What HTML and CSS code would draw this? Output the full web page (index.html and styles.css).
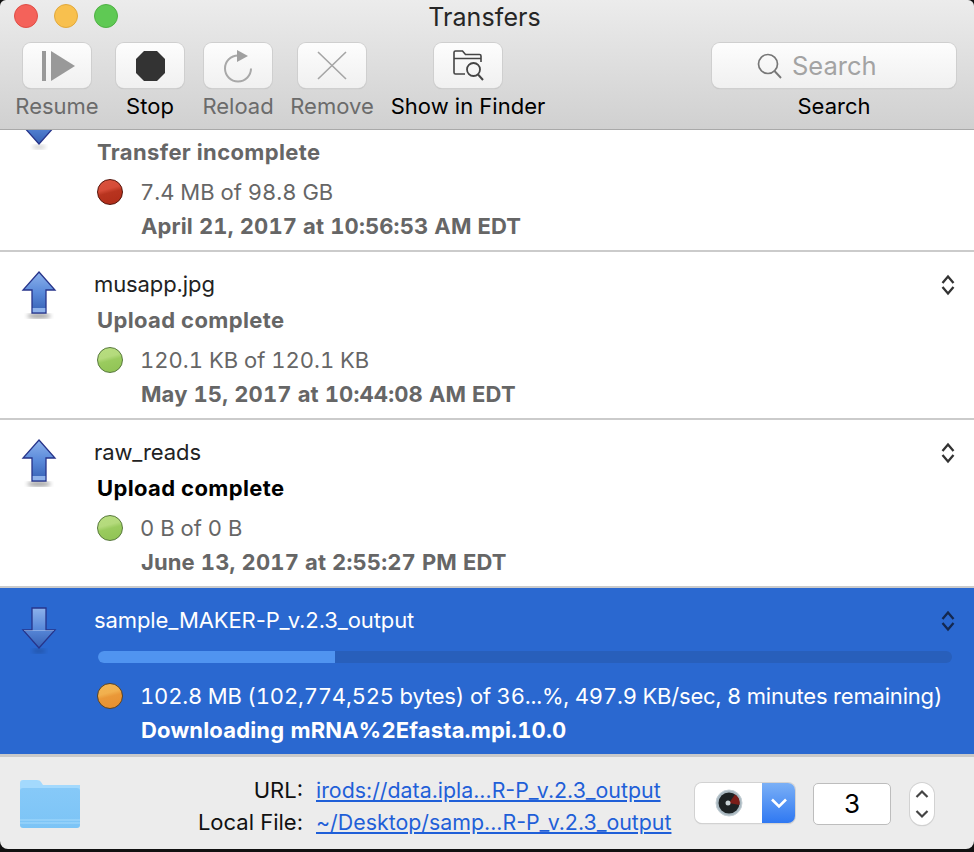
FILE: index.html
```html
<!DOCTYPE html>
<html lang="en">
<head>
  <meta charset="UTF-8">
  <title>Transfers</title>
  <link rel="stylesheet" href="styles.css">
</head>
<body>
  <div class="window">
    <header class="toolbar">
      <div class="titlebar">
        <div class="lights">
          <span class="light red"></span>
          <span class="light yellow"></span>
          <span class="light green"></span>
        </div>
        <h1>Transfers</h1>
      </div>
      <div class="tools">
        <div class="tool tool-resume off">
          <button class="tool-btn">
            <svg width="68" height="45" viewBox="0 0 68 45"><rect x="19" y="8" width="4" height="30" fill="#999"/><path d="M28 8L52 23L28 38Z" fill="#999"/></svg>
          </button>
          <span>Resume</span>
        </div>
        <div class="tool">
          <button class="tool-btn">
            <svg width="68" height="45" viewBox="0 0 68 45"><path d="M28 8H41L49 16V30L41 38H28L20 30V16Z" fill="#333"/></svg>
          </button>
          <span>Stop</span>
        </div>
        <div class="tool tool-reload off">
          <button class="tool-btn">
            <svg width="68" height="45" viewBox="0 0 68 45"><path d="M34 12.500A13 13 0 1 0 47 25.500" fill="none" stroke="#a8a8a8" stroke-width="2"/><path d="M33 7L44 13L33 19Z" fill="#a0a0a0"/></svg>
          </button>
          <span>Reload</span>
        </div>
        <div class="tool tool-remove off">
          <button class="tool-btn">
            <svg width="68" height="45" viewBox="0 0 68 45"><path d="M20 9L48 36M48 9L20 36" fill="none" stroke="#a5a5a5" stroke-width="1.600"/></svg>
          </button>
          <span>Remove</span>
        </div>
        <div class="tool tool-finder">
          <button class="tool-btn">
            <svg width="68" height="45" viewBox="0 0 68 45"><path d="M31 31H21.500Q20 31 20 29.500V9.500Q20 8 21.500 8H28.500L31.500 11.500H45.500Q47 11.500 47 13V19M20 15.500H47" fill="none" stroke="#444" stroke-width="1.600"/><circle cx="39.500" cy="26.500" r="6.500" fill="none" stroke="#444" stroke-width="1.800"/><path d="M44 31.500L49 37" stroke="#444" stroke-width="2"/></svg>
          </button>
          <span>Show in Finder</span>
        </div>
        <div class="tool tool-search">
          <div class="search-box">
            <svg width="26" height="26" viewBox="0 0 26 26"><circle cx="11" cy="11" r="9.500" fill="none" stroke="#777" stroke-width="1.700"/><path d="M17.500 18L24 25" stroke="#777" stroke-width="1.900"/></svg>
            <span>Search</span>
          </div>
          <span>Search</span>
        </div>
      </div>
    </header>

    <main class="list">
      <section class="row row-cut">
        <svg class="arrow" width="38" height="50" viewBox="0 0 38 50">
          <defs>
            <linearGradient id="arrowFill" x1="0" y1="0" x2="0" y2="1">
              <stop offset="0" stop-color="#8db2ec"/>
              <stop offset="0.5" stop-color="#5a8ada"/>
              <stop offset="1" stop-color="#3560b4"/>
            </linearGradient>
            <filter id="soft"><feGaussianBlur stdDeviation="2"/></filter>
            <g id="arrowDown">
              <ellipse cx="18" cy="44" rx="7" ry="2" fill="#000" opacity="0.2" filter="url(#soft)"/>
              <path d="M11 1H25V23H34L18 41L2 23H11Z" fill="url(#arrowFill)" stroke="#27348a" stroke-width="1.300"/>
              <path d="M3 23.500H33" stroke="#a9c4f0" stroke-width="1" opacity="0.6"/>
            </g>
            <g id="arrowUp">
              <ellipse cx="18" cy="45" rx="12" ry="2.500" fill="#000" opacity="0.4" filter="url(#soft)"/>
              <path d="M18 1L34 19H25V42H11V19H2Z" fill="url(#arrowFill)" stroke="#27348a" stroke-width="1.300"/>
              <path d="M11.700 37H24.300V41.300H11.700Z" fill="#8fb2ea"/>
            </g>
          </defs>
          <use href="#arrowDown"/>
        </svg>
        <div class="info">
          <div class="name">&nbsp;</div>
          <div class="status">Transfer incomplete</div>
          <div class="detail"><span class="dot dot-red"></span>7.4 MB of 98.8 GB</div>
          <div class="date">April 21, 2017 at 10:56:53 AM EDT</div>
        </div>
        <svg class="updown" width="14" height="22" viewBox="0 0 14 22"><path d="M1.500 9L7 2.500L12.500 9M1.500 13L7 19.500L12.500 13" fill="none" stroke="#333" stroke-width="2.300"/></svg>
      </section>

      <section class="row">
        <svg class="arrow" width="38" height="50" viewBox="0 0 38 50"><use href="#arrowUp"/></svg>
        <div class="info">
          <div class="name">musapp.jpg</div>
          <div class="status">Upload complete</div>
          <div class="detail"><span class="dot dot-green"></span>120.1 KB of 120.1 KB</div>
          <div class="date">May 15, 2017 at 10:44:08 AM EDT</div>
        </div>
        <svg class="updown" width="14" height="22" viewBox="0 0 14 22"><path d="M1.500 9L7 2.500L12.500 9M1.500 13L7 19.500L12.500 13" fill="none" stroke="#333" stroke-width="2.300"/></svg>
      </section>

      <section class="row">
        <svg class="arrow" width="38" height="50" viewBox="0 0 38 50"><use href="#arrowUp"/></svg>
        <div class="info">
          <div class="name">raw_reads</div>
          <div class="status status-dark">Upload complete</div>
          <div class="detail"><span class="dot dot-green"></span>0 B of 0 B</div>
          <div class="date">June 13, 2017 at 2:55:27 PM EDT</div>
        </div>
        <svg class="updown" width="14" height="22" viewBox="0 0 14 22"><path d="M1.500 9L7 2.500L12.500 9M1.500 13L7 19.500L12.500 13" fill="none" stroke="#333" stroke-width="2.300"/></svg>
      </section>

      <section class="row selected">
        <svg class="arrow" width="38" height="50" viewBox="0 0 38 50"><use href="#arrowDown"/></svg>
        <div class="info">
          <div class="name">sample_MAKER-P_v.2.3_output</div>
          <div class="progress"><div class="progress-fill" style="width: 27.8%"></div></div>
          <div class="detail detail-after-bar"><span class="dot dot-orange"></span>102.8 MB (102,774,525 bytes) of 36...%, 497.9 KB/sec, 8 minutes remaining)</div>
          <div class="date">Downloading mRNA%2Efasta.mpi.10.0</div>
        </div>
        <svg class="updown" width="14" height="22" viewBox="0 0 14 22"><path d="M1.500 9L7 2.500L12.500 9M1.500 13L7 19.500L12.500 13" fill="none" stroke="#14284f" stroke-width="2.300"/></svg>
      </section>
    </main>

    <footer class="bottom">
      <svg class="folder" width="60" height="48" viewBox="0 0 60 48">
        <defs>
          <linearGradient id="folderFill" x1="0" y1="0" x2="0" y2="1">
            <stop offset="0" stop-color="#86c9f8"/>
            <stop offset="1" stop-color="#7cc4f6"/>
          </linearGradient>
        </defs>
        <path d="M0 3Q0 0 3 0H17Q20 0 21 2L23 5H60V12H0Z" fill="#a3d9fd"/>
        <path d="M0 11Q0 8 3 8H57Q60 8 60 11V45Q60 48 57 48H3Q0 48 0 45Z" fill="url(#folderFill)"/>
        <path d="M0 40H60M0 43H60" stroke="#a6dafc" stroke-width="1"/>
      </svg>
      <div class="paths">
        <span class="path-label">URL:</span>
        <a class="path-link" href="#">irods://data.ipla...R-P_v.2.3_output</a>
        <span class="path-label">Local File:</span>
        <a class="path-link" href="#">~/Desktop/samp...R-P_v.2.3_output</a>
      </div>
      <div class="popup">
        <div class="popup-value">
          <svg width="28" height="28" viewBox="0 0 28 28">
            <circle cx="14" cy="14" r="13" fill="#a9b8c0" stroke="#c3ced4" stroke-width="1"/>
            <circle cx="14" cy="14" r="10.500" fill="#1d2224"/>
            <path d="M14 14L24.500 16A10.500 10.500 0 0 0 20 5.500Z" fill="#7a1d18"/>
            <circle cx="13" cy="14" r="2.500" fill="#c8d2d6"/>
          </svg>
        </div>
        <div class="popup-arrow">
          <svg width="18" height="12" viewBox="0 0 18 12"><path d="M2 2.500L9 9.500L16 2.500" fill="none" stroke="#fff" stroke-width="2.600"/></svg>
        </div>
      </div>
      <div class="count">3</div>
      <div class="stepper">
        <svg width="16" height="32" viewBox="0 0 16 32"><path d="M2.500 9L8 3.500L13.500 9M2.500 23L8 28.500L13.500 23" fill="none" stroke="#444" stroke-width="2.200"/></svg>
      </div>
    </footer>
  </div>
</body>
</html>
```

FILE: styles.css
```css
html, body {
  margin: 0;
  height: 100%;
  background: #111;
}
.window {
  width: 974px;
  height: 849px;
  display: flex;
  flex-direction: column;
  overflow: hidden;
  border-radius: 6px 6px 8px 8px;
  font-family: 'Inter', 'Liberation Sans', sans-serif;
  font-size: 22px;
}

/* toolbar */
.toolbar {
  height: 129px;
  flex: none;
  background: linear-gradient(#ececec, #d0d0d0);
  border-bottom: 1px solid #a9a9a9;
  box-sizing: content-box;
}
.titlebar {
  height: 34px;
  position: relative;
  display: flex;
  justify-content: center;
  align-items: center;
}
.lights {
  position: absolute;
  left: 14px;
  top: 4px;
  display: flex;
  gap: 16px;
}
.light {
  width: 24px;
  height: 24px;
  border-radius: 50%;
  box-sizing: border-box;
}
.red { background: #f4625a; border: 1px solid #de4e46; }
.yellow { background: #f8c04e; border: 1px solid #e0a83c; }
.green { background: #5fc954; border: 1px solid #4fb044; }
.titlebar h1 {
  margin: 0 5px 0 0;
  font-size: 25px;
  letter-spacing: 0.1px;
  font-weight: 400;
  color: #262626;
}
.tools {
  display: flex;
  gap: 18px;
  padding: 9px 18px 0 16px;
}
.tool {
  flex: none;
  width: 68px;
  display: flex;
  flex-direction: column;
  align-items: center;
  color: #000;
}
.tool > span {
  margin-top: 5px;
  line-height: 26px;
  white-space: nowrap;
}
.tool.off > span { color: #6b6b6b; }
.tool-resume { width: 82px; }
.tool-reload { margin-left: 2px; }
.tool-remove { width: 82px; margin-left: 1px; }
.tool-finder { width: 154px; }
.tool-btn {
  width: 68px;
  height: 45px;
  padding: 0;
  background: linear-gradient(#fdfdfd, #f0f0f0);
  border: none;
  border-radius: 8px;
  box-shadow: 0 0 0 1px #cfcfcf, 0 1px 1px #b5b5b5;
}
.tool-btn svg { display: block; }
.tool-search { width: 244px; margin-left: auto; }
.search-box {
  width: 244px;
  height: 45px;
  box-sizing: border-box;
  padding-left: 45px;
  display: flex;
  align-items: center;
  gap: 9px;
  background: linear-gradient(#fdfdfd, #f0f0f0);
  border-radius: 8px;
  box-shadow: 0 0 0 1px #cfcfcf, 0 1px 1px #b5b5b5;
  color: #a3a3a3;
  font-size: 25.500px;
}

/* transfer list */
.list {
  flex: 1;
  overflow: hidden;
  background: #fff;
}
.row {
  display: grid;
  grid-template-columns: 94px 1fr 40px;
  height: 166px;
  border-bottom: 2px solid #cbcbcb;
  background: #fff;
  color: #666;
}
.row-cut { margin-top: -46px; }
.arrow {
  margin: 19px 0 0 21px;
}
.updown {
  margin: 22px 0 0 7px;
}
.info { min-width: 0; }
.name {
  margin-top: 14px;
  line-height: 36px;
  color: #222;
  letter-spacing: -0.1px;
}
.status {
  line-height: 36px;
  margin-left: 3px;
  font-weight: 700;
  letter-spacing: 0.37px;
  white-space: nowrap;
}
.status-dark { color: #000; }
.detail {
  margin: 5px 0 0 3px;
  line-height: 34px;
  display: flex;
  align-items: center;
  white-space: nowrap;
  font-variant-numeric: tabular-nums;
}
.date {
  margin: 1px 0 0 47px;
  line-height: 33px;
  font-weight: 700;
  letter-spacing: 0.12px;
  white-space: nowrap;
  font-variant-numeric: tabular-nums;
}
.dot {
  width: 26px;
  height: 26px;
  margin-right: 17px;
  flex: none;
  box-sizing: border-box;
  border-radius: 50%;
}
.dot-red {
  background: linear-gradient(165deg, #d9533e 0, #d64c38 38%, #b8341f 52%, #b02c18 100%);
  border: 1px solid #551208;
}
.dot-green {
  background: linear-gradient(165deg, #b8de80 0, #b4da7c 38%, #9acb5e 52%, #8fc254 100%);
  border: 1px solid #56783a;
}
.dot-orange {
  background: linear-gradient(165deg, #f3b654 0, #f1b04e 38%, #ea9838 52%, #e78f30 100%);
  border: 1px solid #5d4320;
}

/* selected row */
.selected {
  background: #2a68d0;
  color: #fff;
  border-bottom: none;
  height: 166px;
}
.selected .name { color: #fff; }
.selected .date { letter-spacing: 0.18px; }
.progress {
  width: 854px;
  height: 12px;
  margin: 13px 0 0 4px;
  background: #285fbb;
  border-radius: 6px;
  overflow: hidden;
}
.progress-fill {
  height: 100%;
  background: #5094f0;
}
.detail-after-bar {
  margin-top: 16px;
  letter-spacing: -0.19px;
}

/* bottom bar */
.bottom {
  flex: none;
  height: 95px;
  box-sizing: border-box;
  border-top: 3px solid #c9c9c9;
  background: #ececec;
  display: flex;
  align-items: center;
}
.folder {
  margin: 2px 0 0 20px;
  flex: none;
}
.paths {
  width: 615px;
  flex: none;
  margin-top: 6px;
  display: grid;
  grid-template-columns: 223px 1fr;
  column-gap: 13px;
  line-height: 32px;
  color: #111;
}
.path-label { text-align: right; }
.path-link { color: #1f5fd8; white-space: nowrap; font-size: 21.350px; }
.popup {
  width: 100px;
  height: 40px;
  flex: none;
  display: flex;
  border-radius: 7px;
  overflow: hidden;
  box-shadow: 0 0 0 1px #d2d2d2, 0 1px 1px #bbb;
}
.popup-value {
  width: 67px;
  background: #fff;
  display: flex;
  align-items: center;
  justify-content: center;
}
.popup-arrow {
  flex: 1;
  background: linear-gradient(#7bb0f6, #2f78f2);
  display: flex;
  align-items: center;
  justify-content: center;
}
.count {
  width: 78px;
  height: 42px;
  flex: none;
  margin: 2px 0 0 18px;
  box-sizing: border-box;
  border: 1px solid #bdbdbd;
  border-radius: 5px;
  background: #fff;
  font-size: 26px;
  line-height: 40px;
  text-align: center;
  color: #000;
}
.stepper {
  width: 24px;
  height: 42px;
  flex: none;
  margin: 2px 0 0 19px;
  border-radius: 12px;
  background: #fff;
  box-shadow: 0 0 0 1px #d2d2d2, 0 1px 1px #bbb;
  display: flex;
  align-items: center;
  justify-content: center;
}
```
